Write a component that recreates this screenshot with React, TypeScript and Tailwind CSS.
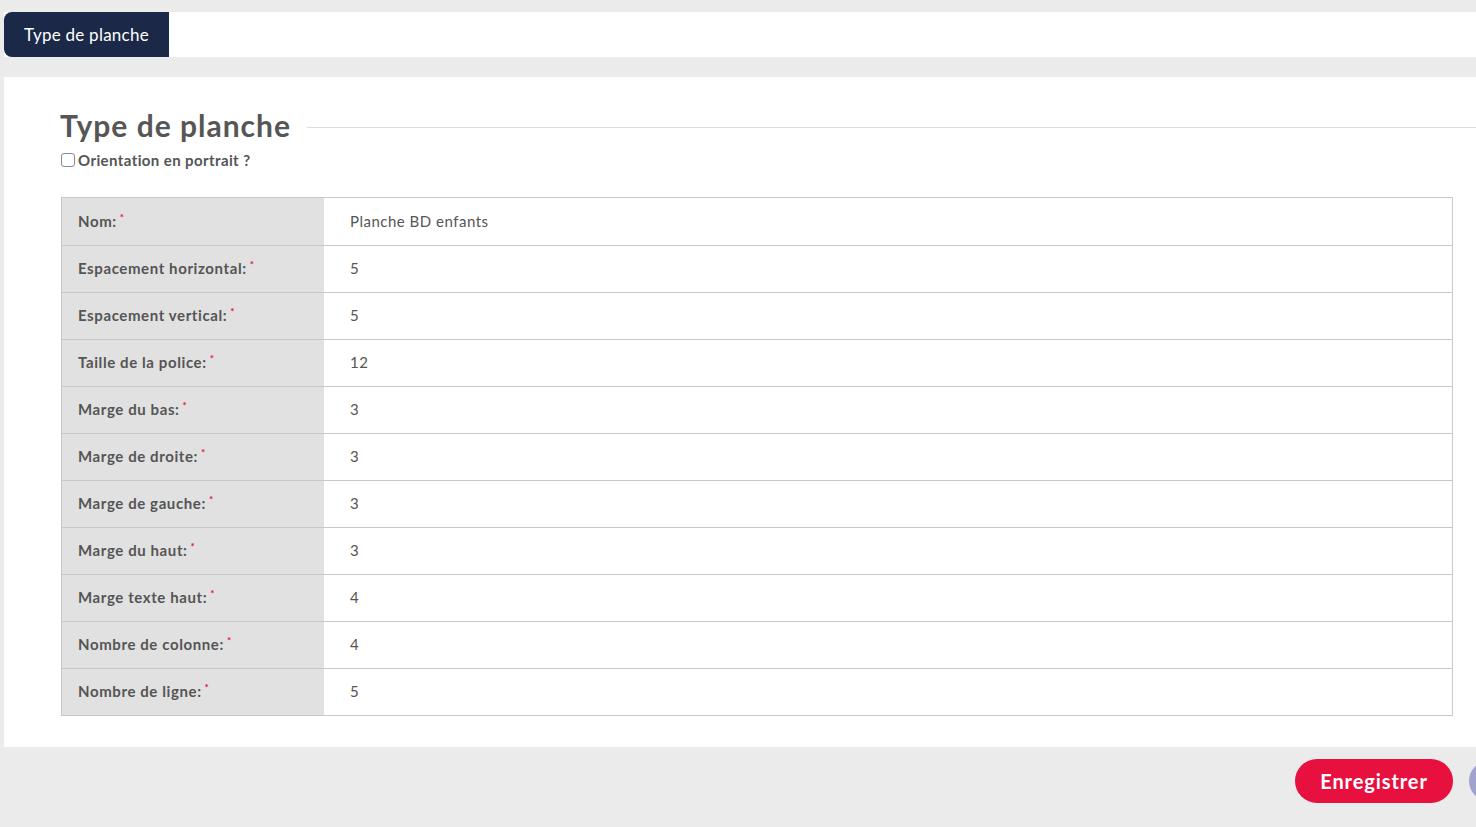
import React from "react";

const rows: [string, string][] = [
  ["Nom:", "Planche BD enfants"],
  ["Espacement horizontal:", "5"],
  ["Espacement vertical:", "5"],
  ["Taille de la police:", "12"],
  ["Marge du bas:", "3"],
  ["Marge de droite:", "3"],
  ["Marge de gauche:", "3"],
  ["Marge du haut:", "3"],
  ["Marge texte haut:", "4"],
  ["Nombre de colonne:", "4"],
  ["Nombre de ligne:", "5"],
];

export default function App() {
  return (
    <div
      className="w-[1476px] h-[827px] bg-[#ebebeb] overflow-hidden"
      style={{ fontFamily: "Lato, 'Open Sans', sans-serif" }}
    >
      <div className="pt-[12px] pl-[4px]">
        <div className="flex h-[45px] bg-white">
          <div className="w-[165px] bg-[#1b2847] rounded-tl-[8px] rounded-bl-[8px] flex items-center justify-center text-white text-[17px] tracking-[0.25px]">
            Type de planche
          </div>
        </div>
      </div>
      <div className="mt-[20px] ml-[4px] h-[670px] bg-white pt-[28px] pl-[56px] pr-[23px]">
        <div className="flex items-center">
          <h1 className="text-[30px] font-bold text-[#565656] leading-[40px] whitespace-nowrap tracking-[1px]">
            Type de planche
          </h1>
          <div className="flex-1 h-px bg-[#dcdcdc] ml-[16px] mr-[-23px] mt-[4px]" />
        </div>
        <label className="flex items-center mt-[4px] ml-[1px] gap-[3px] text-[15px] font-bold text-[#555] tracking-[0.4px]">
          <span className="w-[14px] h-[14px] border border-[#8a8a9a] rounded-[3px] bg-white inline-block" />
          Orientation en portrait ?
        </label>
        <div className="mt-[25px] ml-[1px] border border-[#c8c8c8]">
          {rows.map(([label, value], i) => (
            <div
              key={label}
              className={`flex h-[47px] ${i > 0 ? "border-t border-[#c8c8c8]" : ""}`}
            >
              <div className="w-[262px] bg-[#e1e1e1] flex items-center pl-[16px] text-[15px] font-bold text-[#555] tracking-[0.6px]">
                {label}
                <span className="text-[#e8103f] text-[10px] ml-[3px] -mt-[8px]">*</span>
              </div>
              <div className="flex-1 flex items-center pl-[26px] text-[15px] text-[#555] tracking-[0.5px]">
                {value}
              </div>
            </div>
          ))}
        </div>
      </div>
      <div className="flex justify-end items-center pt-[12px]">
        <button className="w-[158px] h-[44px] rounded-full bg-[#e8103f] text-white text-[20px] font-bold tracking-[0.9px]">
          Enregistrer
        </button>
        <div className="w-[40px] h-[40px] rounded-full bg-[#a0a3d0] ml-[16px] mr-[-33px]" />
      </div>
    </div>
  );
}
